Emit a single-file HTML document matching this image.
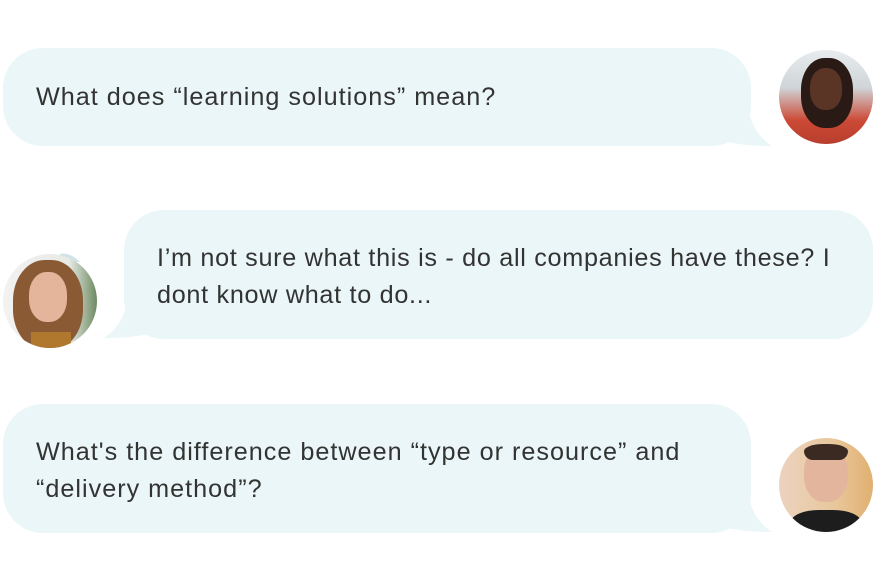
<!DOCTYPE html>
<html><head><style>
body{margin:0;width:874px;height:582px;background:#fff;position:relative;overflow:hidden;font-family:"Liberation Sans",sans-serif;}
.b{position:absolute;background:#eaf6f7;border-radius:40px;color:#333;font-size:25.2px;letter-spacing:1px;line-height:37px;box-sizing:border-box;white-space:nowrap;}
.av{position:absolute;width:94px;height:94px;border-radius:50%;overflow:hidden;}
svg{position:absolute;}
</style></head><body>
<svg width="874" height="582" style="left:0;top:0">
<path d="M715 100 L720 140 Q740 146 772 146 Q748 130 748 100 Z" fill="#eaf6f7"/>
<path d="M160 290 L158 332 Q135 338 104 338 Q128 322 128 290 Z" fill="#eaf6f7"/>
<path d="M715 485 L720 526 Q740 532 772 532 Q748 516 748 485 Z" fill="#eaf6f7"/>
<path d="M60 254 Q70 252 80 262 L60 262 Z" fill="#cfe4e6"/>
</svg>
<div class="b" style="left:3px;top:48px;width:748px;height:98px;padding:31px 0 0 33px;">What does “learning solutions” mean?</div>
<div class="b" style="left:124px;top:210px;width:749px;height:129px;padding:30px 20px 0 33px;letter-spacing:0.7px;">I’m not sure what this is - do all companies have these? I<br>dont know what to do...</div>
<div class="b" style="left:3px;top:404px;width:748px;height:129px;padding:30px 0 0 33px;">What's the difference between “type or resource” and<br>“delivery method”?</div>
<div class="av" style="left:779px;top:50px;background:linear-gradient(#e8ecee 0,#cfd5d8 40%,#cc4a36 75%,#b83e2e 100%);">
<div style="position:absolute;left:22px;top:8px;width:52px;height:70px;border-radius:45%;background:#2a1a16;"></div>
<div style="position:absolute;left:31px;top:18px;width:32px;height:42px;border-radius:45%;background:#5a3526;"></div></div>
<div class="av" style="left:3px;top:254px;background:linear-gradient(90deg,#f2f2f0,#e8eae6 70%,#6d8a60);">
<div style="position:absolute;left:10px;top:6px;width:70px;height:90px;border-radius:45%;background:#8a5a35;"></div>
<div style="position:absolute;left:26px;top:18px;width:38px;height:50px;border-radius:45%;background:#e4b59a;"></div>
<div style="position:absolute;left:28px;top:78px;width:40px;height:20px;background:#b0782f;"></div></div>
<div class="av" style="left:779px;top:438px;background:linear-gradient(90deg,#ecd3c0,#e8c79a 60%,#e0b070);">
<div style="position:absolute;left:25px;top:8px;width:44px;height:56px;border-radius:45%;background:#e3b59c;"></div>
<div style="position:absolute;left:25px;top:6px;width:44px;height:16px;border-radius:50% 50% 10px 10px;background:#3a2a22;"></div>
<div style="position:absolute;left:12px;top:72px;width:70px;height:30px;border-radius:40% 40% 0 0;background:#1d1d1d;"></div></div>
</body></html>
